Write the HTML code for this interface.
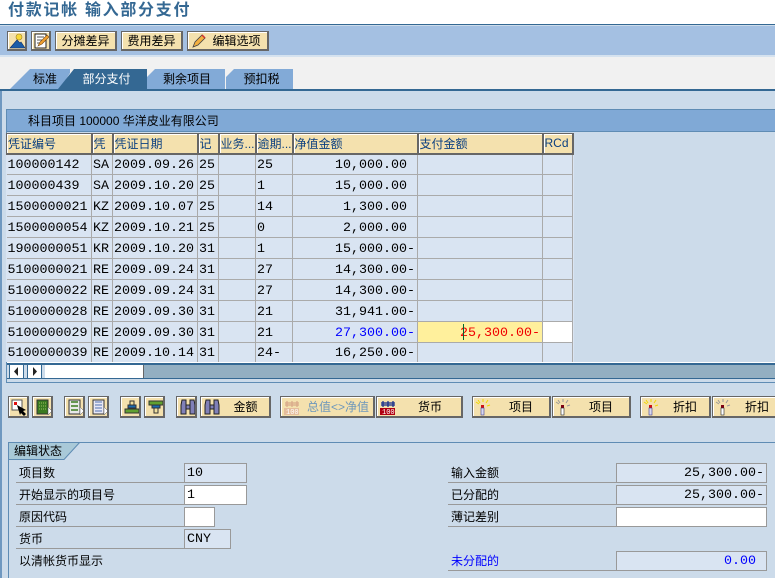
<!DOCTYPE html>
<html><head><meta charset="utf-8">
<style>
*{box-sizing:border-box}
html,body{margin:0;padding:0;width:775px;height:578px;overflow:hidden;background:#ccdbea;font-family:"Liberation Sans","WenQuanYi Zen Hei","Noto Sans CJK SC",sans-serif;font-size:12px;color:#000}
.a{position:absolute}
.btn{position:absolute;background:#f4e1ae;border:1px solid #666;border-right-width:2px;border-bottom-width:2px;box-shadow:inset 1px 1px 0 #fff;height:22px;text-align:center;line-height:19px;white-space:nowrap;overflow:hidden}
.tb{height:20px;line-height:18px}
.btn svg{position:absolute;left:2px;top:2px}
table{position:absolute;left:6px;top:133px;border-collapse:collapse;table-layout:fixed;width:566px;background:#d9e4f2}
th{background:#f4e1ae;border:2px solid #666;border-top-width:1px;border-left-width:1px;height:20px;padding:0 0 0 1px;font-weight:normal;text-align:left;color:#0a3f80;overflow:hidden;white-space:nowrap;font-size:12px;box-shadow:inset 1px 1px 0 #fff}
td{border:1px solid #aaa;border-top:0;border-left:0;height:21px;padding:2px 0 0 1px;font-family:"Liberation Mono",monospace;font-size:13.33px;white-space:pre;overflow:hidden}
td.r{text-align:right;padding:2px 2px 0 0}
tr:last-child td{height:19px;border-bottom:0}
.lbl{position:absolute;height:20px;border-bottom:1px solid #999;line-height:20px;padding-left:3px}
.fld{position:absolute;height:20px;border:1px solid #999;background:#d9e4f2;font-family:"Liberation Mono",monospace;font-size:13.33px;line-height:19px;padding:0 2px;white-space:pre}
.w{background:#fff}
.ra{text-align:right;padding-right:2px}
.tab{position:absolute;top:69px;height:20px;line-height:21px;text-align:center;background:#82aad7;font-size:12px}
</style></head>
<body>
<div class="a" style="left:0;top:0;width:775px;height:24px;background:#fff"></div>
<div class="a" style="left:8px;top:1px;font-size:16px;font-weight:bold;color:#346893;letter-spacing:1.7px;line-height:20px;white-space:nowrap">付款记帐 输入部分支付</div>
<div class="a" style="left:0;top:24px;width:775px;height:1px;background:#346893"></div>
<div class="a" style="left:0;top:26px;width:775px;height:29px;background:#a4c0e2"></div>
<div class="a" style="left:0;top:55px;width:775px;height:2px;background:#d5e2ef"></div>
<div class="a" style="left:0;top:57px;width:775px;height:32px;background:#f1f1f1"></div>

<div class="btn tb" style="left:7px;top:31px;width:20px"><svg width="17" height="16" style="left:1px;top:1px"><circle cx="10" cy="4" r="3" fill="#f8d838" stroke="#a08020" stroke-width=".6"/><path d="M1 15L8 7l3 3 1-1 4 6z" fill="#1a5ca8" stroke="#10306a" stroke-width=".6"/></svg></div>
<div class="btn tb" style="left:31px;top:31px;width:20px"><svg width="17" height="16" style="left:1px;top:1px"><rect x="2" y="1" width="11" height="14" fill="#fff" stroke="#222"/><path d="M4 4h7M4 7h5M4 10h3" stroke="#555"/><path d="M5 13l2-4 7-7 2 2-7 7z" fill="#f0a030" stroke="#7a4a10" stroke-width=".6"/></svg></div>
<div class="btn tb" style="left:55px;top:31px;width:62px">分摊差异</div>
<div class="btn tb" style="left:121px;top:31px;width:62px">费用差异</div>
<div class="btn tb" style="left:187px;top:31px;width:82px;padding-left:18px"><svg width="16" height="16" style="left:3px;top:1px"><path d="M2 14l2-5 7-7 3 3-7 7z" fill="#f4b040" stroke="#444" stroke-width=".8"/><path d="M11 2l3 3" stroke="#d03030" stroke-width="1.5"/></svg>编辑选项</div>

<div class="tab" style="left:10px;width:60px;clip-path:polygon(0 100%,20px 0,100% 0,100% 20%,50px 100%);text-align:left;padding-left:23px">标准</div>
<div class="tab" style="left:147px;width:78px;clip-path:polygon(0 100%,0 40%,8px 0,100% 0,100% 100%);padding-left:2px">剩余项目</div>
<div class="tab" style="left:226px;width:67px;clip-path:polygon(0 100%,0 40%,8px 0,100% 0,100% 100%);padding-left:4px">预扣税</div>
<div class="tab" style="left:58px;width:89px;background:#346893;color:#fff;clip-path:polygon(0 100%,16px 0,100% 0,100% 100%);padding-left:8px">部分支付</div>
<div class="a" style="left:0;top:89px;width:775px;height:2px;background:#346893"></div>
<div class="a" style="left:0;top:91px;width:2px;height:487px;background:#6f98c0"></div>

<div class="a" style="left:6px;top:109px;width:769px;height:274px;border:1px solid #5f8cb4;border-right:0;background:#ccdbea"></div>
<div class="a" style="left:7px;top:110px;width:768px;height:22px;background:#80a9d6;border-bottom:1px solid #5f8cb4;line-height:22px;padding-left:21px;white-space:nowrap">科目项目 100000 华洋皮业有限公司</div>

<table>
<colgroup><col style="width:85px"><col style="width:21px"><col style="width:85px"><col style="width:21px"><col style="width:37px"><col style="width:37px"><col style="width:125px"><col style="width:125px"><col style="width:30px"></colgroup>
<tr><th>凭证编号</th><th>凭</th><th>凭证日期</th><th>记</th><th>业务...</th><th>逾期...</th><th>净值金额</th><th>支付金额</th><th>RCd</th></tr>
<tr><td>100000142</td><td>SA</td><td>2009.09.26</td><td>25</td><td></td><td>25</td><td class="r">10,000.00 </td><td></td><td></td></tr>
<tr><td>100000439</td><td>SA</td><td>2009.10.20</td><td>25</td><td></td><td>1</td><td class="r">15,000.00 </td><td></td><td></td></tr>
<tr><td>1500000021</td><td>KZ</td><td>2009.10.07</td><td>25</td><td></td><td>14</td><td class="r">1,300.00 </td><td></td><td></td></tr>
<tr><td>1500000054</td><td>KZ</td><td>2009.10.21</td><td>25</td><td></td><td>0</td><td class="r">2,000.00 </td><td></td><td></td></tr>
<tr><td>1900000051</td><td>KR</td><td>2009.10.20</td><td>31</td><td></td><td>1</td><td class="r">15,000.00-</td><td></td><td></td></tr>
<tr><td>5100000021</td><td>RE</td><td>2009.09.24</td><td>31</td><td></td><td>27</td><td class="r">14,300.00-</td><td></td><td></td></tr>
<tr><td>5100000022</td><td>RE</td><td>2009.09.24</td><td>31</td><td></td><td>27</td><td class="r">14,300.00-</td><td></td><td></td></tr>
<tr><td>5100000028</td><td>RE</td><td>2009.09.30</td><td>31</td><td></td><td>21</td><td class="r">31,941.00-</td><td></td><td></td></tr>
<tr><td>5100000029</td><td>RE</td><td>2009.09.30</td><td>31</td><td></td><td>21</td><td class="r" style="color:#0000ff">27,300.00-</td><td class="r" style="background:#fff09c;color:#f00000">25,300.00-</td><td style="background:#fff"></td></tr>
<tr><td>5100000039</td><td>RE</td><td>2009.10.14</td><td>31</td><td></td><td>24-</td><td class="r">16,250.00-</td><td></td><td></td></tr>
</table>
<div class="a" style="left:463px;top:324px;width:1px;height:16px;background:#063"></div>

<div class="a" style="left:7px;top:362px;width:768px;height:1px;background:#fff"></div>
<div class="a" style="left:7px;top:363px;width:768px;height:2px;background:#346893"></div>
<div class="a" style="left:144px;top:365px;width:631px;height:13px;background:#93afc2"></div>
<div class="a" style="left:7px;top:378px;width:768px;height:1px;background:#346893"></div>
<div class="a" style="left:9px;top:364px;width:15px;height:15px;background:#fff;border:1px solid #346893"><svg width="13" height="13" style="display:block"><path d="M8 2v9L4 6.500z" fill="#222"/></svg></div>
<div class="a" style="left:27px;top:364px;width:15px;height:15px;background:#fff;border:1px solid #346893"><svg width="13" height="13" style="display:block"><path d="M5 2v9l4-4.500z" fill="#222"/></svg></div>
<div class="a" style="left:45px;top:365px;width:99px;height:13px;background:#fff;border-right:1px solid #666"></div>

<div class="btn" style="left:8px;top:396px;width:21px"><svg width="17" height="17"><rect x="1" y="1" width="10" height="10" fill="#fff" stroke="#555"/><rect x="3" y="3" width="3" height="3" fill="#e01010"/><path d="M6 6l9 5-3 1 3 3-2 2-3-3-1 2z" fill="#000"/></svg></div>
<div class="btn" style="left:32px;top:396px;width:21px"><svg width="17" height="17"><rect x="2" y="1" width="11" height="14" fill="#3a7a20" stroke="#333"/><path d="M4 4h7M4 7h7M4 10h7" stroke="#a0c060" stroke-dasharray="1 1"/><path d="M13 8v8l4-4z" fill="#fff" stroke="#555" stroke-width=".5"/></svg></div>
<div class="btn" style="left:64px;top:396px;width:21px"><svg width="17" height="17"><rect x="2" y="1" width="11" height="14" fill="#e8e8e8" stroke="#333"/><path d="M4 3h7M4 7h7M4 11h7" stroke="#3a7a20" stroke-width="1.500"/><path d="M13 8v8l4-4z" fill="#fff" stroke="#555" stroke-width=".5"/></svg></div>
<div class="btn" style="left:88px;top:396px;width:21px"><svg width="17" height="17"><rect x="2" y="1" width="11" height="14" fill="#e8e8f4" stroke="#333"/><path d="M4 3h7M4 6h7M4 9h7M4 12h7" stroke="#5070b0"/><path d="M13 8v8l4-4z" fill="#fff" stroke="#555" stroke-width=".5"/></svg></div>
<div class="btn" style="left:120px;top:396px;width:21px"><svg width="17" height="17"><path d="M7 2h4v4H7z" fill="#f0e0a0" stroke="#333"/><path d="M5 6h8v3H5z" fill="#1a6ab0" stroke="#333"/><path d="M2 10h14v4H2z" fill="#60a030" stroke="#333"/></svg></div>
<div class="btn" style="left:144px;top:396px;width:21px"><svg width="17" height="17"><path d="M2 2h14v4H2z" fill="#60a030" stroke="#333"/><path d="M5 6h8v3H5z" fill="#1a6ab0" stroke="#333"/><path d="M7 9h4v5H7z" fill="#f0e0a0" stroke="#333"/></svg></div>
<div class="btn" style="left:176px;top:396px;width:21px"><svg width="17" height="17"><path d="M3 1h4v14H2V6zM11 1h4l1 5v9h-5zM7 6h4v4H7z" fill="#8080b8" stroke="#222"/></svg></div>
<div class="btn" style="left:200px;top:396px;width:71px;padding-left:21px;line-height:20px"><svg width="17" height="17"><path d="M3 1h4v14H2V6zM11 1h4l1 5v9h-5zM7 6h4v4H7z" fill="#8080b8" stroke="#222"/></svg>金额</div>
<div class="btn" style="left:280px;top:396px;width:95px;color:#6d97bb;padding-left:22px;line-height:20px;font-size:12px"><svg width="17" height="17"><path d="M4 2v6M9 2v6M14 2v6M2 4h14M2 6h14" stroke="#d8a888" stroke-width="1.200"/><rect x="1" y="9" width="15" height="7" fill="#e5bd9c"/><text x="3" y="15" font-size="7" font-family="Liberation Mono" fill="#fff">100</text></svg>总值&lt;&gt;净值</div>
<div class="btn" style="left:376px;top:396px;width:87px;padding-left:22px;line-height:20px"><svg width="17" height="17"><path d="M4 2v6M9 2v6M14 2v6M2 4h14M2 6h14" stroke="#102a8a" stroke-width="1.200"/><rect x="1" y="9" width="15" height="7" fill="#b00010"/><text x="3" y="15" font-size="7" font-family="Liberation Mono" fill="#fff">100</text></svg>货币</div>
<div class="btn" style="left:472px;top:396px;width:79px;padding-left:20px;line-height:20px"><svg width="17" height="17"><path d="M1 3l3 2M13 1l-2 3M15 6l-3 1M3 1l2 3M8 0v3" stroke="#f0d800"/><rect x="6" y="6" width="3" height="3" fill="#d01010"/><rect x="6" y="9" width="3" height="7" fill="#d8d8f0" stroke="#404090" stroke-width=".6"/></svg>项目</div>
<div class="btn" style="left:552px;top:396px;width:79px;padding-left:20px;line-height:20px"><svg width="17" height="17"><path d="M1 3l3 2M13 1l-2 3M15 6l-3 1M3 1l2 3M8 0v3" stroke="#999"/><rect x="6" y="6" width="3" height="3" fill="#800010"/><rect x="6" y="9" width="3" height="7" fill="#fff" stroke="#222" stroke-width=".6"/></svg>项目</div>
<div class="btn" style="left:640px;top:396px;width:71px;padding-left:20px;line-height:20px"><svg width="17" height="17"><path d="M1 3l3 2M13 1l-2 3M15 6l-3 1M3 1l2 3M8 0v3" stroke="#f0d800"/><rect x="6" y="6" width="3" height="3" fill="#d01010"/><rect x="6" y="9" width="3" height="7" fill="#d8d8f0" stroke="#404090" stroke-width=".6"/></svg>折扣</div>
<div class="btn" style="left:712px;top:396px;width:71px;padding-left:20px;line-height:20px"><svg width="17" height="17"><path d="M1 3l3 2M13 1l-2 3M15 6l-3 1M3 1l2 3M8 0v3" stroke="#999"/><rect x="6" y="6" width="3" height="3" fill="#800010"/><rect x="6" y="9" width="3" height="7" fill="#fff" stroke="#222" stroke-width=".6"/></svg>折扣</div>

<div class="a" style="left:8px;top:442px;width:767px;height:136px;border-top:1px solid #5f8cb4;border-left:1px solid #5f8cb4"></div>
<div class="a" style="left:9px;top:443px;width:71px;height:17px;background:#a9c9d8;clip-path:polygon(0 0,100% 0,55px 100%,0 100%);padding-left:5px;line-height:17px">编辑状态</div>
<svg class="a" style="left:9px;top:442px" width="72" height="18"><path d="M71 0L55 17.500H0" fill="none" stroke="#5f8cb4"/></svg>

<div class="lbl" style="left:16px;top:463px;width:168px">项目数</div>
<div class="fld" style="left:184px;top:463px;width:63px">10</div>
<div class="lbl" style="left:16px;top:485px;width:168px">开始显示的项目号</div>
<div class="fld w" style="left:184px;top:485px;width:63px">1</div>
<div class="lbl" style="left:16px;top:507px;width:168px">原因代码</div>
<div class="fld w" style="left:184px;top:507px;width:31px"></div>
<div class="lbl" style="left:16px;top:529px;width:168px">货币</div>
<div class="fld" style="left:184px;top:529px;width:47px">CNY</div>
<div class="a" style="left:19px;top:551px;line-height:20px">以清帐货币显示</div>

<div class="lbl" style="left:448px;top:463px;width:168px">输入金额</div>
<div class="fld ra" style="left:616px;top:463px;width:151px">25,300.00-</div>
<div class="lbl" style="left:448px;top:485px;width:168px">已分配的</div>
<div class="fld ra" style="left:616px;top:485px;width:151px">25,300.00-</div>
<div class="lbl" style="left:448px;top:507px;width:168px">薄记差别</div>
<div class="fld w" style="left:616px;top:507px;width:151px"></div>
<div class="lbl" style="left:448px;top:551px;width:168px;color:#0000ff">未分配的</div>
<div class="fld ra" style="left:616px;top:551px;width:151px;color:#0000ff">0.00 </div>
</body></html>
